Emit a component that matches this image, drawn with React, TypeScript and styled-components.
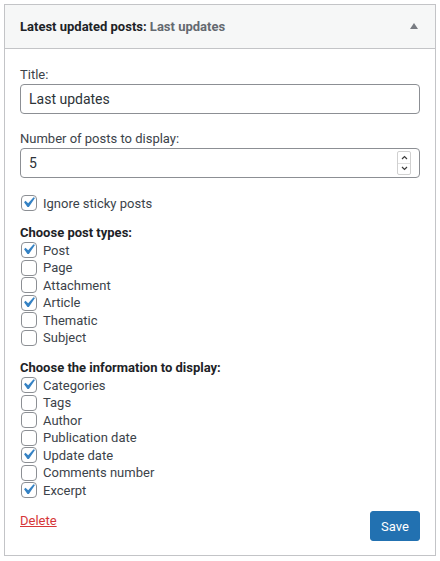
import React, { useState } from "react";
import styled, { createGlobalStyle } from "styled-components";

const Global = createGlobalStyle`
  html, body { margin: 0; padding: 0; background: #fff; }
  body { font-family: Roboto, "Liberation Sans", Arial, sans-serif; color: #3c434a; font-size: 13px; }
  * { box-sizing: border-box; }
`;

const Page = styled.div`
  padding: 4px;
`;

const Widget = styled.div`
  width: 432px;
  border: 1px solid #c3c4c7;
  background: #fff;
`;

const Top = styled.div`
  height: 44px;
  background: #f6f7f7;
  border-bottom: 1px solid #c3c4c7;
  display: flex;
  align-items: center;
  justify-content: space-between;
  padding: 0 17px 0 15px;
`;

const TopTitle = styled.h3`
  margin: 0;
  font-size: 13px;
  font-weight: 700;
  color: #1d2327;
  line-height: 18px;
`;

const InTitle = styled.span`
  color: #646970;
`;

const Arrow = styled.span`
  width: 0;
  height: 0;
  border-left: 4px solid transparent;
  border-right: 4px solid transparent;
  border-bottom: 6px solid #787c82;
  margin-top: -1px;
`;

const Body = styled.div`
  padding: 17px 15px 14px;
  display: flex;
  flex-direction: column;
`;

const Field = styled.div<{ $gap?: number }>`
  display: flex;
  flex-direction: column;
  margin-top: ${(p) => p.$gap ?? 0}px;
`;

const Label = styled.label`
  line-height: 18px;
  font-size: 13px;
  color: #3c434a;
`;

const InputWrap = styled.div`
  position: relative;
  display: flex;
`;

const TextInput = styled.input`
  width: 100%;
  height: 30px;
  border: 1px solid #8c8f94;
  border-radius: 4px;
  padding: 0 8px;
  font-family: inherit;
  font-size: 14px;
  color: #2c3338;
  background: #fff;
  outline: none;
  -moz-appearance: textfield;
  &::-webkit-inner-spin-button,
  &::-webkit-outer-spin-button {
    -webkit-appearance: none;
    margin: 0;
  }
`;

const Spinner = styled.div`
  position: absolute;
  right: 9px;
  top: 3px;
  width: 14px;
  height: 24px;
  border: 1px solid #d0d0d0;
  border-radius: 2px;
  display: flex;
  flex-direction: column;
  background: #fff;
`;

const SpinHalf = styled.span<{ $top?: boolean }>`
  flex: 1;
  display: flex;
  align-items: center;
  justify-content: center;
  border-bottom: ${(p) => (p.$top ? "1px solid #e0e0e0" : "none")};
`;

const Chev = styled.svg`
  width: 7px;
  height: 5px;
`;

const Heading = styled.div<{ $gap: number }>`
  margin-top: ${(p) => p.$gap}px;
  line-height: 17.5px;
  font-weight: 700;
  color: #1d2327;
  font-size: 13px;
`;

const List = styled.div`
  display: flex;
  flex-direction: column;
`;

const Row = styled.label<{ $h?: number; $gap?: number }>`
  display: flex;
  align-items: center;
  height: ${(p) => p.$h ?? 17.5}px;
  margin-top: ${(p) => p.$gap ?? 0}px;
  font-size: 13px;
  color: #3c434a;
  cursor: pointer;
`;

const Box = styled.span`
  width: 16px;
  height: 16px;
  border: 1px solid #8c8f94;
  border-radius: 4px;
  background: #fff;
  margin: 0 6px 0 1px;
  flex: none;
  position: relative;
`;

const Check = styled.svg`
  position: absolute;
  left: -4px;
  top: -4px;
  width: 21px;
  height: 21px;
`;

const Footer = styled.div`
  margin-top: 12px;
  display: flex;
  justify-content: space-between;
  align-items: flex-start;
`;

const DeleteLink = styled.a`
  color: #d63638;
  text-decoration: underline;
  font-size: 13px;
  line-height: 18px;
  margin-top: 1px;
  cursor: pointer;
`;

const SaveButton = styled.button`
  width: 50px;
  height: 30px;
  background: #2271b1;
  border: 1px solid #2271b1;
  border-radius: 3px;
  color: #fff;
  font-family: inherit;
  font-size: 13px;
  padding: 0;
  cursor: pointer;
`;

function CheckItem({ label, checked, h, gap }: { label: string; checked: boolean; h?: number; gap?: number }) {
  const [on, setOn] = useState(checked);
  return (
    <Row $h={h} $gap={gap} onClick={() => setOn(!on)}>
      <Box>
        {on && (
          <Check viewBox="0 0 20 20">
            <path fill="#3582c4" d="M14.83 4.89l1.34.94-5.81 8.38H9.02L5.78 9.67l1.34-1.25 2.57 2.4z" />
          </Check>
        )}
      </Box>
      {label}
    </Row>
  );
}

const postTypes: [string, boolean][] = [
  ["Post", true],
  ["Page", false],
  ["Attachment", false],
  ["Article", true],
  ["Thematic", false],
  ["Subject", false],
];

const infos: [string, boolean][] = [
  ["Categories", true],
  ["Tags", false],
  ["Author", false],
  ["Publication date", false],
  ["Update date", true],
  ["Comments number", false],
  ["Excerpt", true],
];

export default function App() {
  return (
    <Page>
      <Global />
      <Widget>
        <Top>
          <TopTitle>
            Latest updated posts: <InTitle>Last updates</InTitle>
          </TopTitle>
          <Arrow />
        </Top>
        <Body>
          <Field>
            <Label>Title:</Label>
            <TextInput type="text" defaultValue="Last updates" />
          </Field>
          <Field $gap={16}>
            <Label>Number of posts to display:</Label>
            <InputWrap>
              <TextInput type="number" defaultValue={5} />
              <Spinner>
                <SpinHalf $top>
                  <Chev viewBox="0 0 7 5">
                    <path d="M1 4 L3.5 1.5 L6 4" fill="none" stroke="#3c3c3c" strokeWidth="1.2" />
                  </Chev>
                </SpinHalf>
                <SpinHalf>
                  <Chev viewBox="0 0 7 5">
                    <path d="M1 1 L3.5 3.5 L6 1" fill="none" stroke="#3c3c3c" strokeWidth="1.2" />
                  </Chev>
                </SpinHalf>
              </Spinner>
            </InputWrap>
          </Field>
          <CheckItem label="Ignore sticky posts" checked h={18} gap={16} />
          <Heading $gap={12}>Choose post types:</Heading>
          <List>
            {postTypes.map(([l, c]) => (
              <CheckItem key={l} label={l} checked={c} />
            ))}
          </List>
          <Heading $gap={12.5}>Choose the information to display:</Heading>
          <List>
            {infos.map(([l, c]) => (
              <CheckItem key={l} label={l} checked={c} />
            ))}
          </List>
          <Footer>
            <DeleteLink>Delete</DeleteLink>
            <SaveButton type="button">Save</SaveButton>
          </Footer>
        </Body>
      </Widget>
    </Page>
  );
}
